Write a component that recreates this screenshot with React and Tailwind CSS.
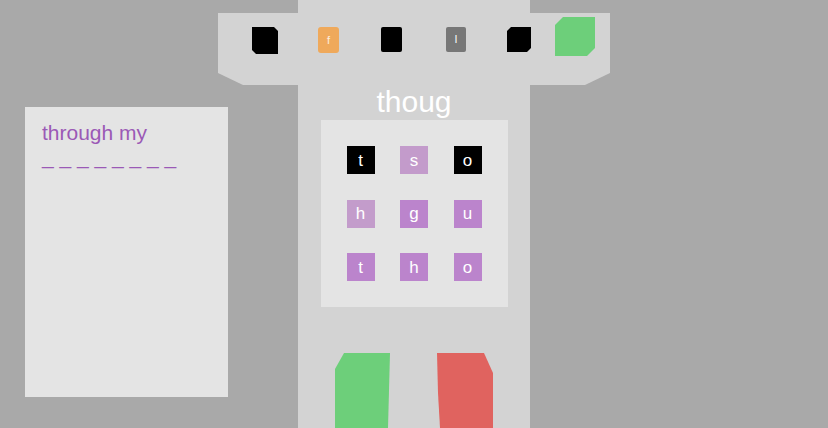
import React from 'react'

const font = { fontFamily: '"Liberation Sans", Arial, sans-serif' }

const grid = [
  { ch: 't', cls: 'bg-black' },
  { ch: 's', cls: 'bg-[#c39bcb]' },
  { ch: 'o', cls: 'bg-black' },
  { ch: 'h', cls: 'bg-[#c39ccb]' },
  { ch: 'g', cls: 'bg-[#bb84cc]' },
  { ch: 'u', cls: 'bg-[#bb84cc]' },
  { ch: 't', cls: 'bg-[#bb84cc]' },
  { ch: 'h', cls: 'bg-[#bb84cc]' },
  { ch: 'o', cls: 'bg-[#bb84cc]' },
]

const TopBar = () => (
  <div className="-mx-[80px] mt-[13px] h-[72px] bg-[#d3d3d3] [clip-path:polygon(0_0,100%_0,100%_60px,367px_72px,25px_72px,0_60px)] flex items-start pl-[34px]">
    <div className="mt-[14px] w-[26px] h-[27px] bg-black [clip-path:polygon(0_0,22px_0,26px_4px,26px_27px,4px_27px,0_23px)]" />
    <div className="mt-[14px] ml-[40px] w-[21px] h-[26px] rounded-[3px] bg-[#efa95b] flex items-center justify-center text-[11px] text-white/80 leading-none">f</div>
    <div className="mt-[14px] ml-[42px] w-[21px] h-[25px] rounded-[2px] bg-black" />
    <div className="mt-[14px] ml-[44px] w-[20px] h-[25px] rounded-[2px] bg-[#777777] flex items-center justify-center text-[11px] text-white leading-none">l</div>
    <div className="mt-[14px] ml-[41px] w-[24px] h-[25px] bg-black [clip-path:polygon(4px_0,24px_0,24px_21px,20px_25px,0_25px,0_4px)]" />
    <div className="mt-[4px] ml-[24px] w-[40px] h-[39px] bg-[#6dcf7a] [clip-path:polygon(8px_0,40px_0,40px_31px,32px_39px,0_39px,0_8px)]" />
  </div>
)

export default function App() {
  return (
    <div className="w-[828px] h-[428px] bg-[#a9a9a9] overflow-hidden flex items-start pl-[25px]" style={font}>
      <div className="mt-[107px] w-[203px] h-[290px] bg-[#e4e4e4] px-[17px] pt-[12px] text-[21px] text-[#9b59b6] leading-[28px]">
        <div>through my</div>
        <div className="mt-[-4px] whitespace-pre">_ _ _ _ _ _ _ _</div>
      </div>

      <div className="ml-[70px] w-[232px] h-[428px] bg-[#d3d3d3] flex flex-col items-stretch">
        <TopBar />
        <div className="mt-[2px] text-center text-[30px] leading-none text-white">thoug</div>
        <div className="mt-[3px] mx-auto w-[187px] h-[187px] bg-[#e4e4e4] p-[26px] grid grid-cols-3 gap-x-[25.5px] gap-y-[25.5px]">
          {grid.map((g, i) => (
            <div key={i} className={`w-[28px] h-[28px] flex items-center justify-center text-white text-[17px] leading-none ${g.cls}`}>
              {g.ch}
            </div>
          ))}
        </div>
        <div className="mt-auto flex justify-between px-[37px]">
          <div className="w-[55px] h-[75px] bg-[#6dcf7a] [clip-path:polygon(9px_0,55px_0,53px_75px,0_75px,0_16px)]" />
          <div className="w-[56px] h-[75px] bg-[#e0635f] [clip-path:polygon(0_0,47px_0,56px_20px,56px_75px,3px_75px,1px_40px)]" />
        </div>
      </div>
    </div>
  )
}
